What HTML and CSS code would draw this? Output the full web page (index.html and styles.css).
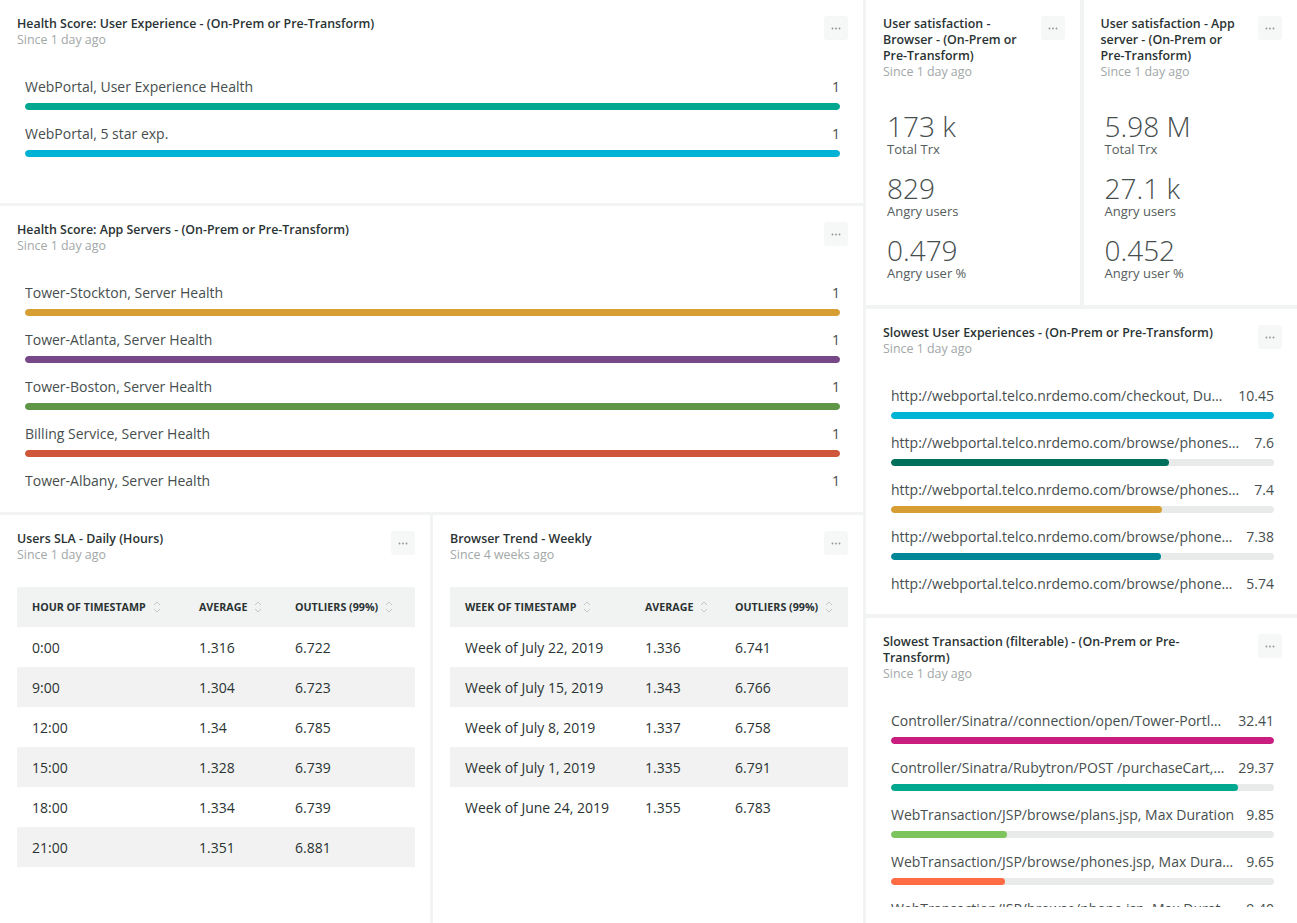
FILE: index.html
```html
<!DOCTYPE html>
<html lang="en">
<head>
<meta charset="utf-8">
<title>Dashboard</title>
<link rel="stylesheet" href="styles.css">
</head>
<body>
<div class="dashboard">
  <div class="col-left">
    <section class="card">
      <header class="card-head">
        <div class="card-titles">
          <h2 class="card-title">Health Score: User Experience - (On-Prem or Pre-Transform)</h2>
          <p class="card-since">Since 1 day ago</p>
        </div>
        <button class="more"><svg width="24" height="24" viewBox="0 0 24 24"><circle cx="8.5" cy="12.5" r="0.9"/><circle cx="12" cy="12.5" r="0.9"/><circle cx="15.5" cy="12.5" r="0.9"/></svg></button>
      </header>
      <div class="bars">
        <div class="bar-row"><div class="bar-label"><span class="bar-name">WebPortal, User Experience Health</span><span class="bar-value">1</span></div><div class="bar-track"><div class="bar-fill c-teal" style="width:100%"></div></div></div>
        <div class="bar-row"><div class="bar-label"><span class="bar-name">WebPortal, 5 star exp.</span><span class="bar-value">1</span></div><div class="bar-track"><div class="bar-fill c-cyan" style="width:100%"></div></div></div>
      </div>
    </section>

    <section class="card">
      <header class="card-head">
        <div class="card-titles">
          <h2 class="card-title">Health Score: App Servers - (On-Prem or Pre-Transform)</h2>
          <p class="card-since">Since 1 day ago</p>
        </div>
        <button class="more"><svg width="24" height="24" viewBox="0 0 24 24"><circle cx="8.5" cy="12.5" r="0.9"/><circle cx="12" cy="12.5" r="0.9"/><circle cx="15.5" cy="12.5" r="0.9"/></svg></button>
      </header>
      <div class="bars">
        <div class="bar-row"><div class="bar-label"><span class="bar-name">Tower-Stockton, Server Health</span><span class="bar-value">1</span></div><div class="bar-track"><div class="bar-fill c-gold" style="width:100%"></div></div></div>
        <div class="bar-row"><div class="bar-label"><span class="bar-name">Tower-Atlanta, Server Health</span><span class="bar-value">1</span></div><div class="bar-track"><div class="bar-fill c-purple" style="width:100%"></div></div></div>
        <div class="bar-row"><div class="bar-label"><span class="bar-name">Tower-Boston, Server Health</span><span class="bar-value">1</span></div><div class="bar-track"><div class="bar-fill c-green" style="width:100%"></div></div></div>
        <div class="bar-row"><div class="bar-label"><span class="bar-name">Billing Service, Server Health</span><span class="bar-value">1</span></div><div class="bar-track"><div class="bar-fill c-red" style="width:100%"></div></div></div>
        <div class="bar-row"><div class="bar-label"><span class="bar-name">Tower-Albany, Server Health</span><span class="bar-value">1</span></div><div class="bar-track"><div class="bar-fill c-blue" style="width:100%"></div></div></div>
      </div>
    </section>

    <div class="row-tables">
      <section class="card">
        <header class="card-head">
          <div class="card-titles">
            <h2 class="card-title">Users SLA - Daily (Hours)</h2>
            <p class="card-since">Since 1 day ago</p>
          </div>
          <button class="more"><svg width="24" height="24" viewBox="0 0 24 24"><circle cx="8.5" cy="12.5" r="0.9"/><circle cx="12" cy="12.5" r="0.9"/><circle cx="15.5" cy="12.5" r="0.9"/></svg></button>
        </header>
        <table class="data-table t-hours">
          <colgroup><col class="c1"><col class="c2"><col class="c3"></colgroup>
          <thead>
            <tr>
              <th>Hour of timestamp<svg class="sort" width="8" height="14" viewBox="0 0 8 14"><path d="M1 5 L4 2 L7 5 M1 9 L4 12 L7 9"/></svg></th>
              <th>Average<svg class="sort" width="8" height="14" viewBox="0 0 8 14"><path d="M1 5 L4 2 L7 5 M1 9 L4 12 L7 9"/></svg></th>
              <th>Outliers (99%)<svg class="sort" width="8" height="14" viewBox="0 0 8 14"><path d="M1 5 L4 2 L7 5 M1 9 L4 12 L7 9"/></svg></th>
            </tr>
          </thead>
          <tbody>
            <tr><td>0:00</td><td>1.316</td><td>6.722</td></tr>
            <tr><td>9:00</td><td>1.304</td><td>6.723</td></tr>
            <tr><td>12:00</td><td>1.34</td><td>6.785</td></tr>
            <tr><td>15:00</td><td>1.328</td><td>6.739</td></tr>
            <tr><td>18:00</td><td>1.334</td><td>6.739</td></tr>
            <tr><td>21:00</td><td>1.351</td><td>6.881</td></tr>
          </tbody>
        </table>
      </section>

      <section class="card">
        <header class="card-head">
          <div class="card-titles">
            <h2 class="card-title">Browser Trend - Weekly</h2>
            <p class="card-since">Since 4 weeks ago</p>
          </div>
          <button class="more"><svg width="24" height="24" viewBox="0 0 24 24"><circle cx="8.5" cy="12.5" r="0.9"/><circle cx="12" cy="12.5" r="0.9"/><circle cx="15.5" cy="12.5" r="0.9"/></svg></button>
        </header>
        <table class="data-table t-weeks">
          <colgroup><col class="c1"><col class="c2"><col class="c3"></colgroup>
          <thead>
            <tr>
              <th>Week of timestamp<svg class="sort" width="8" height="14" viewBox="0 0 8 14"><path d="M1 5 L4 2 L7 5 M1 9 L4 12 L7 9"/></svg></th>
              <th>Average<svg class="sort" width="8" height="14" viewBox="0 0 8 14"><path d="M1 5 L4 2 L7 5 M1 9 L4 12 L7 9"/></svg></th>
              <th>Outliers (99%)<svg class="sort" width="8" height="14" viewBox="0 0 8 14"><path d="M1 5 L4 2 L7 5 M1 9 L4 12 L7 9"/></svg></th>
            </tr>
          </thead>
          <tbody>
            <tr><td>Week of July 22, 2019</td><td>1.336</td><td>6.741</td></tr>
            <tr><td>Week of July 15, 2019</td><td>1.343</td><td>6.766</td></tr>
            <tr><td>Week of July 8, 2019</td><td>1.337</td><td>6.758</td></tr>
            <tr><td>Week of July 1, 2019</td><td>1.335</td><td>6.791</td></tr>
            <tr><td>Week of June 24, 2019</td><td>1.355</td><td>6.783</td></tr>
          </tbody>
        </table>
      </section>
    </div>
  </div>

  <div class="col-right">
    <div class="row-billboards">
      <section class="card">
        <header class="card-head">
          <div class="card-titles">
            <h2 class="card-title">User satisfaction - Browser - (On-Prem or Pre-Transform)</h2>
            <p class="card-since">Since 1 day ago</p>
          </div>
          <button class="more"><svg width="24" height="24" viewBox="0 0 24 24"><circle cx="8.5" cy="12.5" r="0.9"/><circle cx="12" cy="12.5" r="0.9"/><circle cx="15.5" cy="12.5" r="0.9"/></svg></button>
        </header>
        <div class="billboard">
          <div class="bb-item"><div class="bb-num">173 k</div><div class="bb-label">Total Trx</div></div>
          <div class="bb-item"><div class="bb-num">829</div><div class="bb-label">Angry users</div></div>
          <div class="bb-item"><div class="bb-num">0.479</div><div class="bb-label">Angry user %</div></div>
        </div>
      </section>
      <section class="card">
        <header class="card-head">
          <div class="card-titles">
            <h2 class="card-title">User satisfaction - App server - (On-Prem or Pre-Transform)</h2>
            <p class="card-since">Since 1 day ago</p>
          </div>
          <button class="more"><svg width="24" height="24" viewBox="0 0 24 24"><circle cx="8.5" cy="12.5" r="0.9"/><circle cx="12" cy="12.5" r="0.9"/><circle cx="15.5" cy="12.5" r="0.9"/></svg></button>
        </header>
        <div class="billboard">
          <div class="bb-item"><div class="bb-num">5.98 M</div><div class="bb-label">Total Trx</div></div>
          <div class="bb-item"><div class="bb-num">27.1 k</div><div class="bb-label">Angry users</div></div>
          <div class="bb-item"><div class="bb-num">0.452</div><div class="bb-label">Angry user %</div></div>
        </div>
      </section>
    </div>

    <section class="card">
      <header class="card-head">
        <div class="card-titles">
          <h2 class="card-title">Slowest User Experiences - (On-Prem or Pre-Transform)</h2>
          <p class="card-since">Since 1 day ago</p>
        </div>
        <button class="more"><svg width="24" height="24" viewBox="0 0 24 24"><circle cx="8.5" cy="12.5" r="0.9"/><circle cx="12" cy="12.5" r="0.9"/><circle cx="15.5" cy="12.5" r="0.9"/></svg></button>
      </header>
      <div class="bars">
        <div class="bar-row"><div class="bar-label"><span class="bar-name">http://webportal.telco.nrdemo.com/checkout, Duration</span><span class="bar-value">10.45</span></div><div class="bar-track"><div class="bar-fill c-cyan2" style="width:100%"></div></div></div>
        <div class="bar-row"><div class="bar-label"><span class="bar-name">http://webportal.telco.nrdemo.com/browse/phones/samsung-galaxy, Duration</span><span class="bar-value">7.6</span></div><div class="bar-track"><div class="bar-fill c-dkgreen" style="width:72.7%"></div></div></div>
        <div class="bar-row"><div class="bar-label"><span class="bar-name">http://webportal.telco.nrdemo.com/browse/phones/apple-iphone, Duration</span><span class="bar-value">7.4</span></div><div class="bar-track"><div class="bar-fill c-gold" style="width:70.8%"></div></div></div>
        <div class="bar-row"><div class="bar-label"><span class="bar-name">http://webportal.telco.nrdemo.com/browse/phones/lg-g6, Duration</span><span class="bar-value">7.38</span></div><div class="bar-track"><div class="bar-fill c-petrol" style="width:70.6%"></div></div></div>
        <div class="bar-row"><div class="bar-label"><span class="bar-name">http://webportal.telco.nrdemo.com/browse/phones/moto-z, Duration</span><span class="bar-value">5.74</span></div><div class="bar-track"><div class="bar-fill c-purple" style="width:54.9%"></div></div></div>
      </div>
    </section>

    <section class="card">
      <header class="card-head">
        <div class="card-titles">
          <h2 class="card-title">Slowest Transaction (filterable) - (On-Prem or Pre-Transform)</h2>
          <p class="card-since">Since 1 day ago</p>
        </div>
        <button class="more"><svg width="24" height="24" viewBox="0 0 24 24"><circle cx="8.5" cy="12.5" r="0.9"/><circle cx="12" cy="12.5" r="0.9"/><circle cx="15.5" cy="12.5" r="0.9"/></svg></button>
      </header>
      <div class="bars">
        <div class="bar-row"><div class="bar-label"><span class="bar-name">Controller/Sinatra//connection/open/Tower-Portland, Max Duration</span><span class="bar-value">32.41</span></div><div class="bar-track"><div class="bar-fill c-magenta" style="width:100%"></div></div></div>
        <div class="bar-row"><div class="bar-label"><span class="bar-name">Controller/Sinatra/Rubytron/POST /purchaseCart, Max Duration</span><span class="bar-value">29.37</span></div><div class="bar-track"><div class="bar-fill c-teal" style="width:90.6%"></div></div></div>
        <div class="bar-row"><div class="bar-label"><span class="bar-name">WebTransaction/JSP/browse/plans.jsp, Max Duration</span><span class="bar-value">9.85</span></div><div class="bar-track"><div class="bar-fill c-lime" style="width:30.4%"></div></div></div>
        <div class="bar-row"><div class="bar-label"><span class="bar-name">WebTransaction/JSP/browse/phones.jsp, Max Duration</span><span class="bar-value">9.65</span></div><div class="bar-track"><div class="bar-fill c-orange" style="width:29.8%"></div></div></div>
        <div class="bar-row"><div class="bar-label"><span class="bar-name">WebTransaction/JSP/browse/phone.jsp, Max Duration</span><span class="bar-value">9.40</span></div><div class="bar-track"><div class="bar-fill c-purple" style="width:29%"></div></div></div>
      </div>
    </section>
  </div>
</div>
</body>
</html>
```

FILE: styles.css
```css
* { box-sizing: border-box; }

html, body {
  margin: 0;
  height: 100%;
}

body {
  background: #f2f3f3;
  font-family: "Open Sans", "Liberation Sans", sans-serif;
  color: #2a3333;
  overflow: hidden;
}

.dashboard {
  display: grid;
  grid-template-columns: 863px 1fr;
  column-gap: 3px;
  height: 923px;
}

.col-left {
  display: grid;
  grid-template-rows: 203px 306px 1fr;
  row-gap: 3px;
  min-height: 0;
}

.col-right {
  display: grid;
  grid-template-rows: 305px 305px 1fr;
  row-gap: 4px;
  min-height: 0;
}

.row-tables {
  display: grid;
  grid-template-columns: 1fr 1fr;
  column-gap: 3px;
  min-height: 0;
}

.row-billboards {
  display: grid;
  grid-template-columns: 1fr 1fr;
  column-gap: 4px;
  min-height: 0;
}

.card {
  background: #fff;
  padding: 0 15px 16px 17px;
  display: flex;
  flex-direction: column;
  min-height: 0;
  min-width: 0;
  overflow: hidden;
}

.card-head {
  display: flex;
  justify-content: space-between;
  align-items: flex-start;
  gap: 16px;
  padding-top: 16px;
  flex: none;
}

.card-titles { min-width: 0; }

.card-title {
  margin: 0;
  font-size: 12.4px;
  line-height: 16px;
  font-weight: 600;
  color: #2a3333;
}

.card-since {
  margin: 0;
  font-size: 12.4px;
  line-height: 16px;
  color: #a2a7a7;
}

.more {
  flex: none;
  width: 24px;
  height: 24px;
  margin-top: 0;
  padding: 0;
  border: none;
  border-radius: 3px;
  background: #f6f7f7;
  display: block;
}

.more svg { display: block; fill: #8e9595; }

/* bar lists */
.bars {
  margin-top: 29px;
  padding: 0 8px 0 8px;
  flex: 1;
  min-height: 0;
  overflow: hidden;
}

.bar-row { margin-bottom: 14px; }

.bar-label {
  display: flex;
  font-size: 14px;
  line-height: 20px;
  color: #464e4e;
}

.bar-name {
  flex: 1;
  min-width: 0;
  white-space: nowrap;
  overflow: hidden;
  text-overflow: ellipsis;
}

.bar-value {
  flex: none;
  margin-left: 12px;
}

.bar-track {
  margin-top: 6px;
  height: 7px;
  border-radius: 4px;
  background: #e9eaea;
  overflow: hidden;
}

.bar-fill {
  height: 100%;
  border-radius: 4px;
}

.c-teal { background: #00a88f; }
.c-cyan { background: #00b3d6; }
.c-cyan2 { background: #00b4d5; }
.c-gold { background: #d79f33; }
.c-purple { background: #774887; }
.c-green { background: #5e9645; }
.c-red { background: #cf5638; }
.c-blue { background: #3a73b8; }
.c-dkgreen { background: #006f5c; }
.c-petrol { background: #008797; }
.c-magenta { background: #c91d80; }
.c-lime { background: #7dc45d; }
.c-orange { background: #ff6b43; }

/* billboards */
.billboard {
  margin-top: 31px;
  padding-left: 4px;
}

.bb-item { margin-bottom: 16px; }

.bb-num {
  font-size: 28px;
  line-height: 30px;
  font-weight: 300;
  color: #464e4e;
}

.bb-label {
  font-size: 13px;
  line-height: 16px;
  color: #555d5d;
}

/* tables */
.data-table {
  margin-top: 24px;
  width: 100%;
  border-collapse: collapse;
  table-layout: fixed;
  flex: none;
}

.t-hours .c1 { width: 167px; }
.t-hours .c2 { width: 96px; }
.t-weeks .c1 { width: 180px; }
.t-weeks .c2 { width: 90px; }

.data-table th {
  height: 40px;
  padding: 0 0 0 15px;
  text-align: left;
  font-size: 10.7px;
  font-weight: 700;
  text-transform: uppercase;
  background: #f1f2f2;
  color: #2a3333;
  white-space: nowrap;
}

.data-table td {
  height: 40px;
  padding: 0 0 0 15px;
  font-size: 14px;
  color: #2a3333;
  white-space: nowrap;
}

.data-table tbody tr:nth-child(even) td { background: #f2f2f2; }

.sort {
  vertical-align: middle;
  margin-left: 7px;
  margin-top: -2px;
  fill: none;
  stroke: #c3c8c8;
  stroke-width: 1;
}
```
